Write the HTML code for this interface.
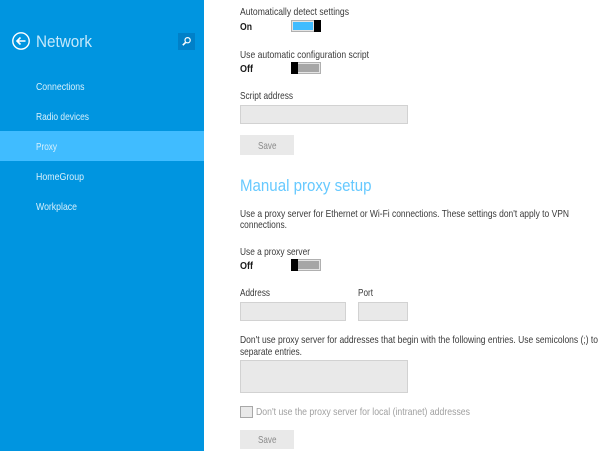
<!DOCTYPE html>
<html><head><meta charset="utf-8">
<style>
html,body{margin:0;padding:0;width:600px;height:451px;overflow:hidden;background:#fff}
svg{display:block}
text{font-family:"Liberation Sans",sans-serif;font-size:10.5px;fill:#3a3a3a}
.w{fill:#d8f0fc}
.b{font-weight:bold;fill:#1a1a1a}
</style></head><body>
<svg width="600" height="451" viewBox="0 0 600 451" xmlns="http://www.w3.org/2000/svg">
<rect x="0" y="0" width="204" height="451" fill="#0095e0"/>
<rect x="0" y="131" width="204" height="30" fill="#40bcff"/>
<circle cx="21" cy="41" r="8.2" fill="none" stroke="#fff" stroke-width="1.4"/>
<path d="M25.5 41H17M20.5 37.5L17 41l3.5 3.5" fill="none" stroke="#fff" stroke-width="1.6"/>
<text x="36" y="47" style="font-size:16.5px;fill:#c4e8fb" textLength="56" lengthAdjust="spacingAndGlyphs">Network</text>
<rect x="178" y="33" width="17" height="17" fill="#0080c8"/>
<circle cx="187.6" cy="40.2" r="2.6" fill="none" stroke="#fff" stroke-width="1.2"/>
<path d="M185.6 42.4L182.8 45.2" stroke="#fff" stroke-width="1.6"/>
<text x="36" y="90" class="w" textLength="48.5" lengthAdjust="spacingAndGlyphs">Connections</text>
<text x="36" y="120" class="w" textLength="53" lengthAdjust="spacingAndGlyphs">Radio devices</text>
<text x="36" y="150" class="w" textLength="21" lengthAdjust="spacingAndGlyphs">Proxy</text>
<text x="36" y="180" class="w" textLength="48" lengthAdjust="spacingAndGlyphs">HomeGroup</text>
<text x="36" y="210" class="w" textLength="41" lengthAdjust="spacingAndGlyphs">Workplace</text>

<text x="240" y="15" textLength="109" lengthAdjust="spacingAndGlyphs">Automatically detect settings</text>
<text x="240" y="30" class="b" textLength="12" lengthAdjust="spacingAndGlyphs">On</text>
<rect x="291.5" y="20.5" width="23" height="11" fill="#e4e4e4" stroke="#b0b0b0"/>
<rect x="293" y="22" width="20" height="8" fill="#40bcff"/>
<rect x="314" y="20" width="7" height="12" fill="#000"/>

<text x="240" y="58" textLength="129" lengthAdjust="spacingAndGlyphs">Use automatic configuration script</text>
<text x="240" y="72" class="b" textLength="13" lengthAdjust="spacingAndGlyphs">Off</text>
<rect x="291.5" y="62.5" width="29" height="11" fill="#e4e4e4" stroke="#b0b0b0"/>
<rect x="298" y="64" width="21" height="8" fill="#a6a6a6"/>
<rect x="291" y="62" width="7" height="12" fill="#000"/>

<text x="240" y="99" textLength="53" lengthAdjust="spacingAndGlyphs">Script address</text>
<rect x="240.5" y="105.5" width="167" height="18" fill="#e9e9e9" stroke="#d2d2d2"/>
<rect x="240" y="135" width="54" height="20" fill="#e9e9e9"/>
<text x="258" y="149" style="fill:#8a8a8a" textLength="18.5" lengthAdjust="spacingAndGlyphs">Save</text>

<text x="240" y="191" style="font-size:17px;fill:#66c9ff" textLength="131.5" lengthAdjust="spacingAndGlyphs">Manual proxy setup</text>
<text x="240" y="217" textLength="329" lengthAdjust="spacingAndGlyphs">Use a proxy server for Ethernet or Wi-Fi connections. These settings don't apply to VPN</text>
<text x="240" y="228" textLength="47" lengthAdjust="spacingAndGlyphs">connections.</text>
<text x="240" y="255" textLength="70" lengthAdjust="spacingAndGlyphs">Use a proxy server</text>
<text x="240" y="269" class="b" textLength="13" lengthAdjust="spacingAndGlyphs">Off</text>
<rect x="291.5" y="259.5" width="29" height="11" fill="#e4e4e4" stroke="#b0b0b0"/>
<rect x="298" y="261" width="21" height="8" fill="#a6a6a6"/>
<rect x="291" y="259" width="7" height="12" fill="#000"/>

<text x="240" y="296" textLength="30" lengthAdjust="spacingAndGlyphs">Address</text>
<text x="358" y="296" textLength="15" lengthAdjust="spacingAndGlyphs">Port</text>
<rect x="240.5" y="302.5" width="105" height="18" fill="#e9e9e9" stroke="#d2d2d2"/>
<rect x="358.5" y="302.5" width="49" height="18" fill="#e9e9e9" stroke="#d2d2d2"/>

<text x="240" y="343" textLength="358" lengthAdjust="spacingAndGlyphs">Don't use proxy server for addresses that begin with the following entries. Use semicolons (;) to</text>
<text x="240" y="355" textLength="62" lengthAdjust="spacingAndGlyphs">separate entries.</text>
<rect x="240.5" y="360.5" width="167" height="32" fill="#e9e9e9" stroke="#d2d2d2"/>

<rect x="240.5" y="406.5" width="12" height="11" fill="#e9e9e9" stroke="#a8a8a8" stroke-width="1"/>
<text x="256" y="415" style="fill:#a0a0a0" textLength="214" lengthAdjust="spacingAndGlyphs">Don't use the proxy server for local (intranet) addresses</text>
<rect x="240" y="430" width="54" height="19" fill="#e9e9e9"/>
<text x="258" y="443" style="fill:#8a8a8a" textLength="18.5" lengthAdjust="spacingAndGlyphs">Save</text>
</svg>
</body></html>
